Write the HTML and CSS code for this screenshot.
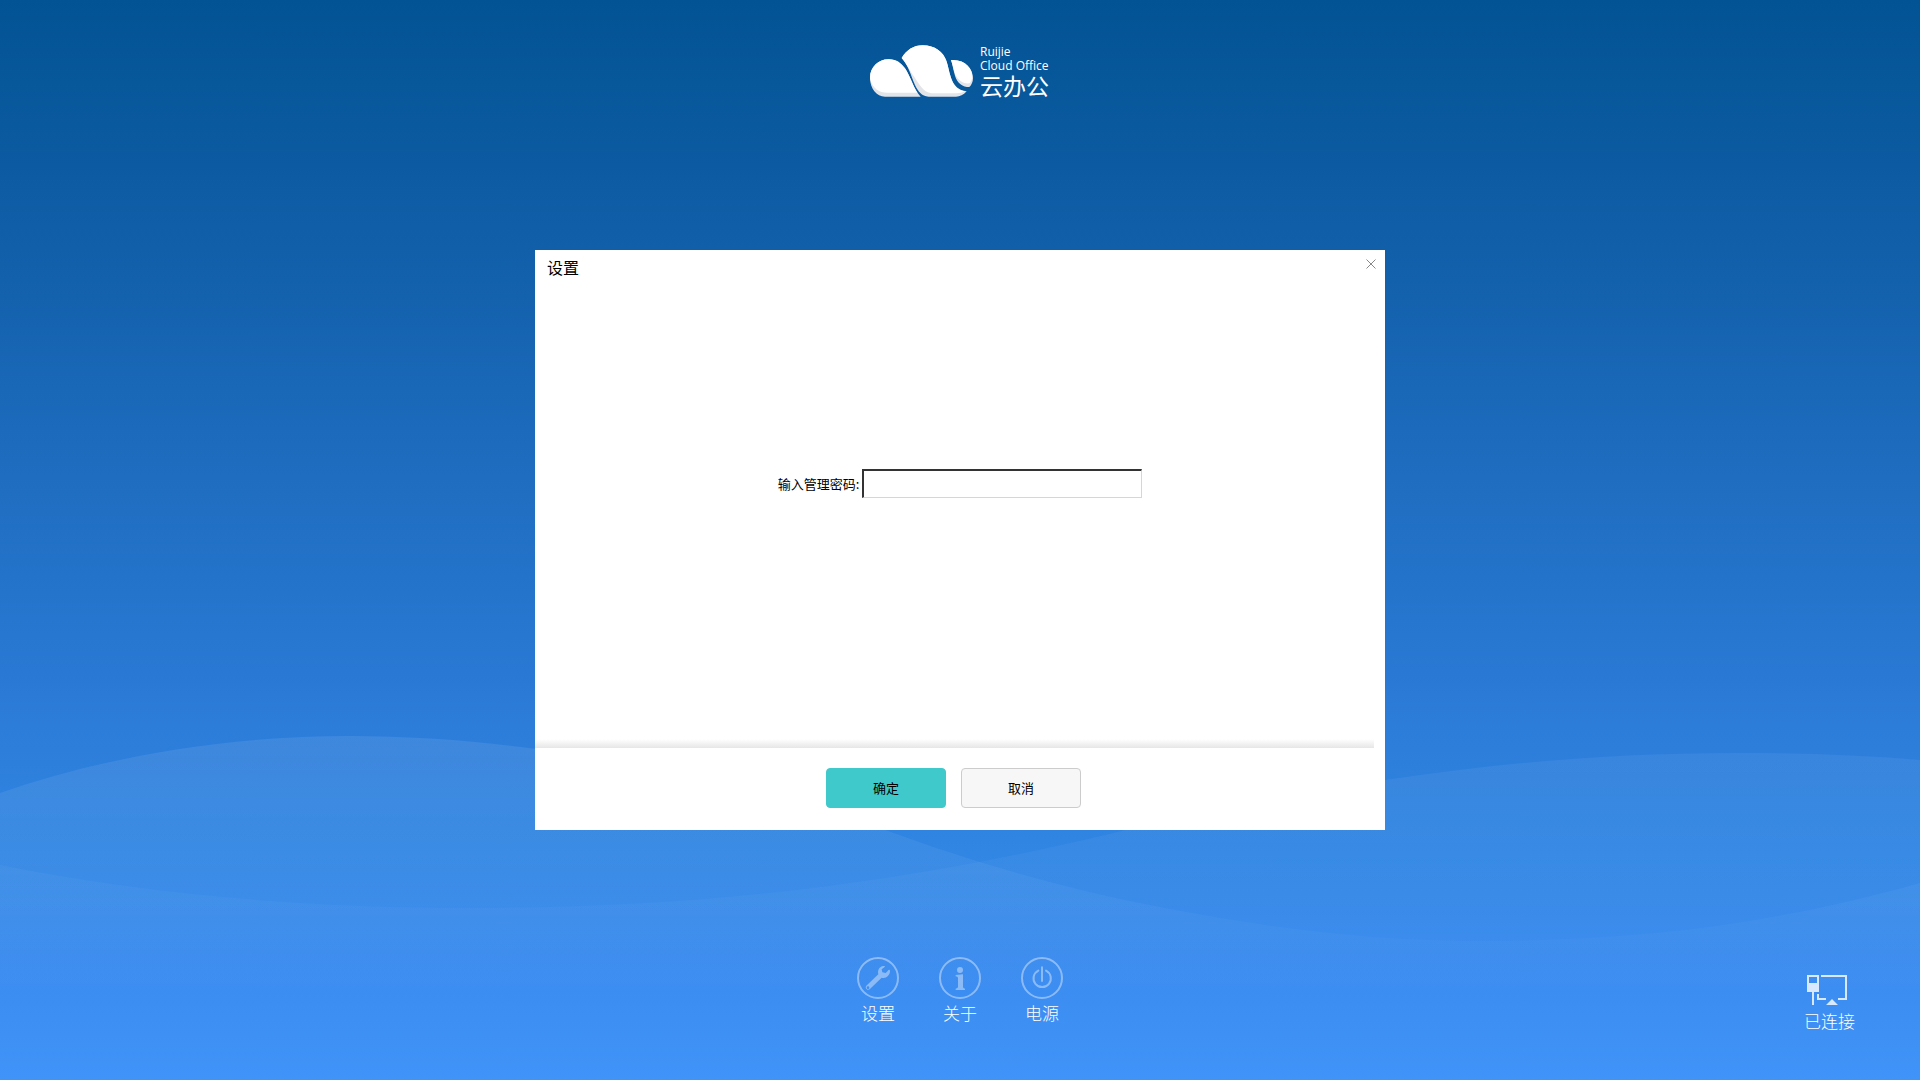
FILE: index.html
```html
<!DOCTYPE html>
<html lang="zh-CN">
<head>
<meta charset="utf-8">
<meta name="viewport" content="width=device-width, initial-scale=1">
<title>云办公</title>
<link rel="stylesheet" href="styles.css">
</head>
<body>
<div class="desktop">
  <svg class="waves" viewBox="0 0 1920 1080" preserveAspectRatio="none" aria-hidden="true">
    <defs>
      <linearGradient id="fade-a" gradientUnits="userSpaceOnUse" x1="0" y1="736" x2="0" y2="1001">
        <stop offset="0" stop-color="#fff" stop-opacity=".085"/>
        <stop offset=".5" stop-color="#fff" stop-opacity=".045"/>
        <stop offset="1" stop-color="#fff" stop-opacity="0"/>
      </linearGradient>
      <linearGradient id="fade-b" gradientUnits="userSpaceOnUse" x1="0" y1="753" x2="0" y2="1001">
        <stop offset="0" stop-color="#fff" stop-opacity=".055"/>
        <stop offset=".6" stop-color="#fff" stop-opacity=".025"/>
        <stop offset="1" stop-color="#fff" stop-opacity="0"/>
      </linearGradient>
    </defs>
    <path fill="url(#fade-a)" d="M0 793C110 755 230 736 350 736C530 736 720 776 885 830C1000 872 1120 905 1280 927C1350 936 1410 941 1480 941C1640 941 1780 923 1920 883V1001H0Z"/>
    <path fill="url(#fade-b)" d="M0 865C150 895 310 908 470 908C700 908 900 885 1126 830C1210 810 1290 794 1385 780C1500 763 1610 753 1740 753C1800 753 1860 755 1920 760V1001H0Z"/>
  </svg>

  <header class="brand">
    <svg class="brand-mark" viewBox="60 45 309 156" aria-hidden="true">
      <path fill="#e2e4e8" d="M115 88C138 87 153 99 165 115C182 140 192 180 212 200H105C80 200 60 175 60 143C60 112 85 88 115 88Z"/>
      <path fill="#fff" d="M115 88C138 87 153 99 165 115C179 136 188 166 202 188H112C88 188 68 176 60 146C59 112 85 88 115 88Z"/>
      <path fill="#e2e4e8" d="M155 84C170 60 190 46 218 46C255 46 280 66 289 92C301 127 301 178 350 184C340 195 330 200 318 200H236C214 198 205 185 195 165C183 138 175 105 155 84Z"/>
      <path fill="#fff" d="M155 84C170 60 190 46 218 46C255 46 280 66 289 92C301 127 301 178 346 184C338 188 330 190 318 190H245C218 188 207 160 187 133C177 116 167 98 155 84Z"/>
      <path fill="#e2e4e8" d="M303 90C345 87 369 115 369 145C369 156 364 166 358 171C338 171 322 160 315 137C310 120 308 104 303 90Z"/>
      <path fill="#fff" d="M303 90C345 87 367 115 367 140C366 150 363 156 358 160C342 162 326 152 316 134C310 118 308 104 303 90Z"/>
    </svg>
    <div class="brand-text">
      <span class="brand-en">Ruijie</span>
      <span class="brand-en">Cloud Office</span>
      <span class="brand-cn">云办公</span>
    </div>
  </header>

  <footer class="dock">
    <nav class="dock-nav">
      <button class="dock-item" type="button">
        <svg class="dock-icon" viewBox="0 0 126 126" aria-hidden="true">
          <circle class="ring" cx="63" cy="63" r="60"/>
          <path class="solid" fill-rule="evenodd" d="M79 27C67 29 61 39 64 52L28 86C23 92 29 101 38 97L74 62C86 66 98 57 99 43C99 37 95 37 92 42L86 48L76 46L74 37L82 31C85 28 84 26 79 27ZM33 88A4 4 0 1 1 33 96A4 4 0 1 1 33 88Z"/>
        </svg>
        <span class="dock-label">设置</span>
      </button>
      <button class="dock-item" type="button">
        <svg class="dock-icon" viewBox="0 0 126 126" aria-hidden="true">
          <circle class="ring" cx="63" cy="63" r="60"/>
          <circle class="solid" cx="63" cy="39" r="9"/>
          <path class="solid" d="M50 54L72 52V90Q72 94 78 95V99H50V95Q57 94 57 90V63Q57 58 50 58Z"/>
        </svg>
        <span class="dock-label">关于</span>
      </button>
      <button class="dock-item" type="button">
        <svg class="dock-icon" viewBox="0 0 126 126" aria-hidden="true">
          <circle class="ring" cx="63" cy="63" r="60"/>
          <path class="line" d="M52 41A26 26 0 1 0 75 41M63 31V72"/>
        </svg>
        <span class="dock-label">电源</span>
      </button>
    </nav>
    <div class="status">
      <svg class="status-icon" viewBox="0 0 120 90" aria-hidden="true">
        <path fill-rule="evenodd" d="M0 0H36V51H21V90H15V51H0ZM6 6V24H30V6Z"/>
        <path d="M42 0H120V75H93V69H114V6H42ZM30 57H36V69H57V75H30ZM75 72L93 90H57Z"/>
      </svg>
      <span class="dock-label">已连接</span>
    </div>
  </footer>
</div>

<div class="overlay">
  <form class="dialog" role="dialog" aria-labelledby="dialog-title">
    <div class="dialog-head">
      <h1 class="dialog-title" id="dialog-title">设置</h1>
      <button class="dialog-close" type="button" aria-label="关闭">
        <svg class="close-icon" viewBox="0 0 10 10" aria-hidden="true"><path d="M.5 .5L9.500 9.500M9.500 .5L.5 9.500"/></svg>
      </button>
    </div>
    <div class="dialog-body">
      <label class="field-label" for="password">输入管理密码:</label>
      <input class="field-input" id="password" type="password">
    </div>
    <div class="dialog-foot">
      <button class="btn btn-primary" type="submit">确定</button>
      <button class="btn btn-plain" type="button">取消</button>
    </div>
  </form>
</div>
</body>
</html>
```
FILE: styles.css
```css
* {
  box-sizing: border-box;
}

body {
  margin: 0;
  font-family: "Noto Sans CJK SC", sans-serif;
  font-size: 13px;
  color: #000;
}

button {
  font: inherit;
  cursor: pointer;
}

.desktop {
  position: relative;
  display: flex;
  flex-direction: column;
  justify-content: space-between;
  min-height: 100vh;
  background: linear-gradient(#025394 0%, #115fa9 23%, #2c7cd9 67%, #3186e3 79%, #3b8cf0 90%, #4093f8 100%);
}

/* Backdrop curves behind the content */
.waves {
  position: absolute;
  inset: 0;
  width: 100%;
  height: 100%;
}

.brand {
  position: relative;
  display: flex;
  justify-content: center;
  gap: 7px;
  padding-top: 45px;
  color: #fff;
}

.brand-mark {
  width: 103px;
  height: 52px;
}

.brand-text {
  display: flex;
  flex-direction: column;
  width: 70px;
  white-space: nowrap;
}

.brand-en {
  font-family: "Open Sans", "Noto Sans", sans-serif;
  font-size: 12px;
  line-height: 14px;
}

.brand-cn {
  font-size: 23px;
  line-height: 24px;
}

.dock {
  position: relative;
  display: grid;
  grid-template-columns: 1fr auto 1fr;
  align-items: end;
  padding-bottom: 47px;
  color: #fff;
}

.dock-nav {
  grid-column: 2;
  display: flex;
  gap: 40px;
  padding-bottom: 8px;
}

.dock-item {
  display: flex;
  flex-direction: column;
  align-items: center;
  gap: 2px;
  width: 42px;
  padding: 0;
  border: 0;
  background: none;
  color: inherit;
}

.dock-icon {
  width: 42px;
  height: 42px;
  opacity: .4;
}

.ring,
.line {
  fill: none;
  stroke: #fff;
  stroke-width: 6;
}

.line {
  stroke-linecap: round;
}

.solid {
  fill: #fff;
}

.dock-label {
  font-size: 17px;
  font-weight: 300;
  line-height: 24px;
  white-space: nowrap;
}

.status {
  justify-self: end;
  display: flex;
  flex-direction: column;
  gap: 4px;
  margin-right: 65px;
}

.status-icon {
  width: 40px;
  height: 30px;
  margin-left: 3px;
  fill: #d8e8fd;
}

.overlay {
  position: fixed;
  inset: 0;
  display: grid;
  place-items: center;
}

.dialog {
  display: flex;
  flex-direction: column;
  width: 850px;
  max-width: 100%;
  min-height: 580px;
  background: #fff;
}

.dialog-head {
  display: flex;
  justify-content: space-between;
  align-items: flex-start;
  padding: 4px 4px 4px 12px;
}

.dialog-title {
  margin: 0;
  font-size: 16px;
  font-weight: 400;
  line-height: 26px;
}

.dialog-close {
  display: grid;
  place-items: center;
  width: 20px;
  height: 20px;
  padding: 0;
  border: 0;
  background: none;
}

.close-icon {
  width: 10px;
  height: 10px;
  fill: none;
  stroke: #888;
}

.dialog-body {
  flex: 1;
  display: flex;
  justify-content: center;
  align-items: center;
  gap: 3px;
  padding-bottom: 56px;
}

.field-input {
  width: 280px;
  height: 29px;
  padding: 0 4px;
  border: 2px solid;
  border-color: #333 #d9d6d2 #d9d6d2 #333;
  border-right-width: 1px;
  border-bottom-width: 1px;
  outline: 0;
  background: #fff;
  font: inherit;
}

.dialog-foot {
  display: flex;
  justify-content: center;
  gap: 15px;
  margin-right: 11px;
  padding: 29px 2px 22px 0;
  background: linear-gradient(#fff, #e6e6e6) top / 100% 9px no-repeat;
}

.btn {
  width: 120px;
  height: 40px;
  padding: 0 0 2px;
  border: 1px solid;
  border-radius: 4px;
  color: #000;
}

.btn-primary {
  border-color: #3fc9cb;
  background: #3fc9cb;
}

.btn-plain {
  border-color: #ccc;
  background: #f7f7f7;
}
```
